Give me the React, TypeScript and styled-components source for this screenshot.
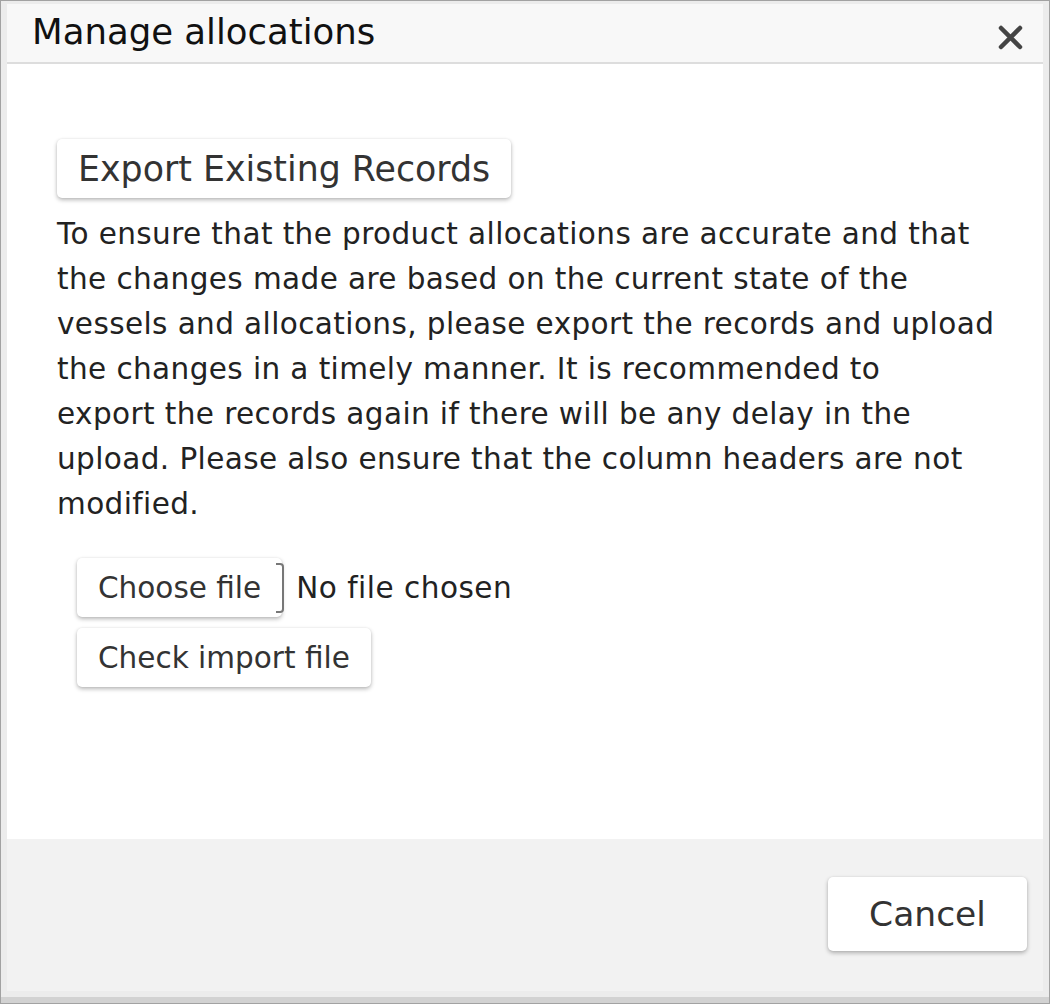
import React from "react";
import styled, { createGlobalStyle } from "styled-components";

const GlobalStyle = createGlobalStyle`
  html, body {
    margin: 0;
    padding: 0;
    background: #ffffff;
  }
  body {
    font-family: "DejaVu Sans", "Liberation Sans", sans-serif;
  }
`;

// Styled Components

const Frame = styled.div`
  width: 1050px;
  height: 1004px;
  box-sizing: border-box;
  border: 1px solid #a2a2a2;
  padding: 3px 6px 12px 6px;
  background: linear-gradient(to bottom, #ececec calc(100% - 6px), #d2d2d2 calc(100% - 6px));
  display: flex;
  flex-direction: column;
`;

const Dialog = styled.div`
  flex: 1;
  display: flex;
  flex-direction: column;
  background: #ffffff;
`;

const Header = styled.div`
  height: 58px;
  background: #f8f8f8;
  border-bottom: 2px solid #dddddd;
  display: flex;
  align-items: center;
  justify-content: space-between;
  padding: 0 20px 0 25px;
`;

const Title = styled.h2`
  margin: 0;
  font-size: 35.5px;
  font-weight: 400;
  color: #111111;
  line-height: 1;
  margin-top: -2px;
`;

const CloseButton = styled.button`
  border: none;
  background: none;
  padding: 0;
  width: 25px;
  height: 25px;
  margin-top: 8px;
  cursor: pointer;
  display: flex;
`;

const Body = styled.div`
  flex: 1;
  padding: 75px 50px 0 50px;
  display: flex;
  flex-direction: column;
  align-items: flex-start;
`;

const Button = styled.button<{ $size?: number; $height?: number }>`
  font-family: inherit;
  font-size: ${(p) => p.$size ?? 29.5}px;
  color: #333333;
  background: #ffffff;
  border: none;
  border-radius: 5px;
  height: ${(p) => p.$height ?? 59}px;
  padding: 0 21px;
  box-shadow: 0 2px 4px rgba(0, 0, 0, 0.28), 0 0 2px rgba(0, 0, 0, 0.08);
  cursor: pointer;
  white-space: nowrap;
`;

// line breaks kept as in the original layout
const Notice = styled.p`
  margin: 14px 0 0 0;
  font-size: 29.5px;
  letter-spacing: 0.4px;
  line-height: 45px;
  color: #222222;
  white-space: nowrap;
`;

const ImportBlock = styled.div`
  margin: 31px 0 0 20px;
  display: flex;
  flex-direction: column;
  gap: 11px;
`;

const FileRow = styled.div`
  display: flex;
  align-items: center;
`;

const FileEdge = styled.span`
  width: 8px;
  height: 50px;
  margin-left: -6px;
  border: 2px solid #777777;
  border-left: none;
  border-radius: 0 4px 4px 0;
  box-sizing: border-box;
`;

const FileName = styled.span`
  font-size: 29.5px;
  letter-spacing: 0.5px;
  color: #222222;
  margin-left: 12px;
`;

const Footer = styled.div`
  height: 152px;
  background: #f2f2f2;
  display: flex;
  justify-content: flex-end;
  align-items: flex-start;
  padding: 38px 16px 0 0;
  box-sizing: border-box;
`;

const CloseIcon = () => (
  <svg width="25" height="25" viewBox="0 0 25 25">
    <path d="M3 3 L22 22 M22 3 L3 22" stroke="#444444" strokeWidth="4.5" strokeLinecap="round" />
  </svg>
);

export default function App() {
  return (
    <>
      <GlobalStyle />
      <Frame>
        <Dialog>
          <Header>
            <Title>Manage allocations</Title>
            <CloseButton aria-label="Close">
              <CloseIcon />
            </CloseButton>
          </Header>
          <Body>
            <Button $size={34.8}>Export Existing Records</Button>
            <Notice>
              To ensure that the product allocations are accurate and that
              <br />
              the changes made are based on the current state of the
              <br />
              vessels and allocations, please export the records and upload
              <br />
              the changes in a timely manner. It is recommended to
              <br />
              export the records again if there will be any delay in the
              <br />
              upload. Please also ensure that the column headers are not
              <br />
              modified.
            </Notice>
            <ImportBlock>
              <FileRow>
                <Button>Choose file</Button>
                <FileEdge />
                <FileName>No file chosen</FileName>
              </FileRow>
              <div>
                <Button>Check import file</Button>
              </div>
            </ImportBlock>
          </Body>
          <Footer>
            <Button $size={34.5} $height={74} style={{ width: 199 }}>
              Cancel
            </Button>
          </Footer>
        </Dialog>
      </Frame>
    </>
  );
}
